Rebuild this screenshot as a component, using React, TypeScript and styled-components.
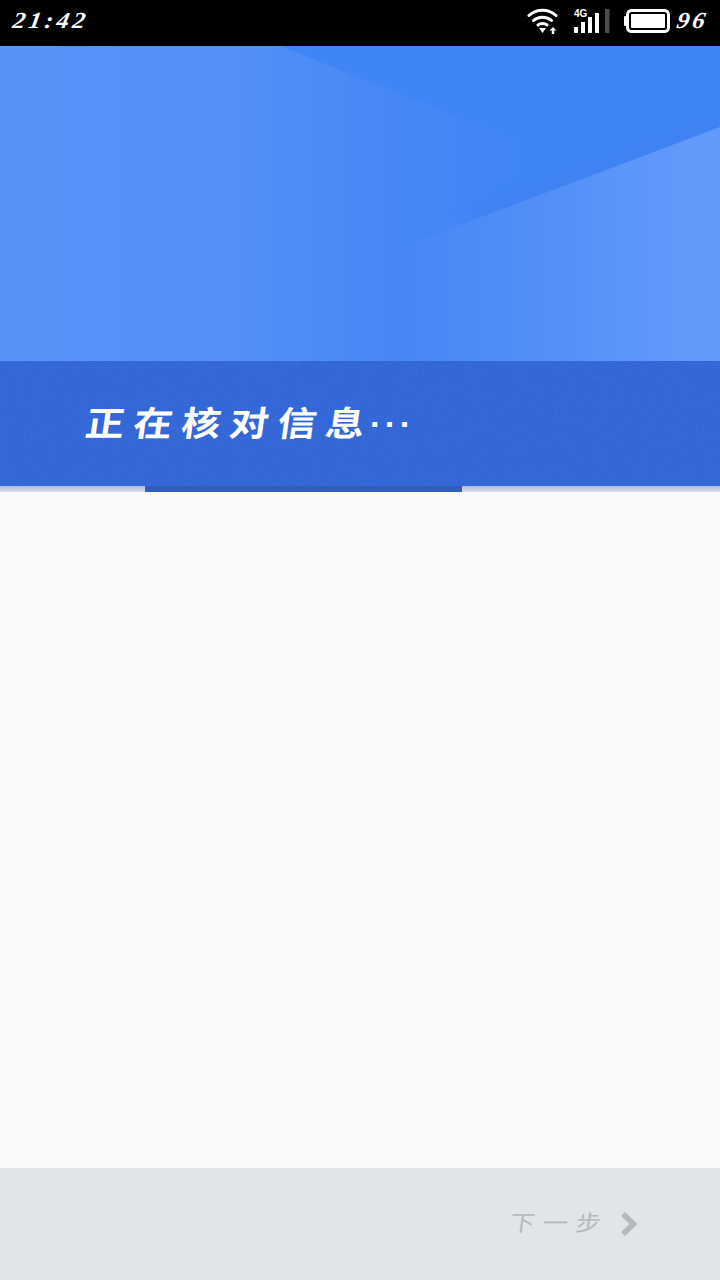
import { ReactElement } from "react";
import styled, { createGlobalStyle } from "styled-components";

const GlobalStyle = createGlobalStyle`
  html, body {
    margin: 0;
    padding: 0;
    background: #fafafa;
  }
  * {
    box-sizing: border-box;
  }
`;

const App = (): ReactElement => {
  return (
    <Page>
      <GlobalStyle />
      <StatusBar>
        <StatusText>21:42</StatusText>
        <StatusIcons>
          <IconSlot $gap={0}>
            <WifiIcon />
          </IconSlot>
          <IconSlot $gap={15}>
            <SignalIcon />
          </IconSlot>
          <IconSlot $gap={13}>
            <BatteryIcon />
          </IconSlot>
          <IconSlot $gap={7}>
            <BatteryLevel>96</BatteryLevel>
          </IconSlot>
        </StatusIcons>
      </StatusBar>
      <Hero>
        <HeroArt />
      </Hero>
      <Banner>
        <BannerGrain />
        <BannerTitle>正在核对信息</BannerTitle>
        <BannerDots>···</BannerDots>
      </Banner>
      <ProgressStrip>
        <ProgressFill />
      </ProgressStrip>
      <Content />
      <Footer>
        <NextLabel>下一步</NextLabel>
        <ChevronIcon />
      </Footer>
    </Page>
  );
};

export default App;

const WifiIcon = () => (
  <svg width="32" height="26" viewBox="0 0 32 26">
    <g fill="none" stroke="#fff" strokeWidth="3" strokeLinecap="round">
      <path d="M2 7.5 C9.5 0.6 21.5 0.6 29 7.5" />
      <path d="M6.5 12.5 C11.5 8 19.5 8 24.5 12.5" />
      <path d="M11 17 C13.5 15 17.5 15 20 17" />
    </g>
    <path d="M12 20 L19 20 L15.5 25 Z" fill="#fff" />
    <path d="M26 19 L29.5 22.5 L27.2 22.5 L27.2 26 L24.8 26 L24.8 22.5 L22.5 22.5 Z" fill="#fff" />
  </svg>
);

const SignalIcon = () => (
  <svg width="37" height="26" viewBox="0 0 37 26">
    <text x="0" y="9" fill="#fff" fontSize="10" fontWeight="700" fontFamily="'Liberation Sans', sans-serif">
      4G
    </text>
    <rect x="0" y="19" width="4" height="6" fill="#fff" />
    <rect x="7" y="14" width="4" height="11" fill="#fff" />
    <rect x="14" y="9" width="4" height="16" fill="#fff" />
    <rect x="21" y="5" width="4" height="20" fill="#fff" />
    <rect x="31" y="1" width="4.5" height="24" fill="#4a4a4a" />
  </svg>
);

const BatteryIcon = () => (
  <svg width="46" height="24" viewBox="0 0 46 24">
    <rect x="0" y="7" width="3" height="10" rx="1" fill="#fff" />
    <rect x="3.5" y="1.5" width="41" height="21" rx="4" fill="none" stroke="#fff" strokeWidth="3" />
    <rect x="7" y="5" width="34" height="14" rx="1" fill="#fff" />
  </svg>
);

const HeroArt = () => (
  <svg width="720" height="315" viewBox="0 0 720 315" style={{ display: "block" }}>
    <defs>
      <linearGradient id="heroBase" x1="0" y1="0" x2="720" y2="0" gradientUnits="userSpaceOnUse">
        <stop offset="0" stopColor="#5794f8" />
        <stop offset="0.33" stopColor="#5290f7" />
        <stop offset="0.555" stopColor="#4687f5" />
        <stop offset="0.72" stopColor="#4085f6" />
        <stop offset="1" stopColor="#4085f6" />
      </linearGradient>
      <linearGradient id="heroFacet" x1="400" y1="0" x2="690" y2="0" gradientUnits="userSpaceOnUse">
        <stop offset="0" stopColor="#4687f5" />
        <stop offset="0.5" stopColor="#5290f7" />
        <stop offset="1" stopColor="#629afb" />
      </linearGradient>
      <filter id="heroBlur" x="-10%" y="-50%" width="120%" height="200%">
        <feGaussianBlur stdDeviation="7" />
      </filter>
    </defs>
    <rect width="720" height="315" fill="url(#heroBase)" />
    <polygon points="280,0 720,0 720,81 598,127" fill="#4085f6" />
    <line x1="720" y1="76" x2="470" y2="170" stroke="#3a78e4" strokeOpacity="0.3" strokeWidth="12" filter="url(#heroBlur)" />
    <polygon points="720,81 415,196 385,315 720,315" fill="url(#heroFacet)" />
  </svg>
);

const BannerGrain = () => (
  <GrainSvg width="720" height="125">
    <filter id="grain">
      <feTurbulence type="fractalNoise" baseFrequency="0.9" numOctaves="2" seed="4" />
      <feColorMatrix values="0 0 0 0 0.55  0 0 0 0 0.68  0 0 0 0 1  0 0 0 1.4 -0.72" />
    </filter>
    <rect width="720" height="125" filter="url(#grain)" opacity="0.2" />
  </GrainSvg>
);

const ChevronIcon = () => (
  <svg width="18" height="26" viewBox="0 0 18 26">
    <path d="M3 3 L13.5 13 L3 23" fill="none" stroke="#b4b8bc" strokeWidth="5.5" />
  </svg>
);

const Page = styled.div`
  display: flex;
  flex-direction: column;
  width: 720px;
  height: 1280px;
  overflow: hidden;
`;

const StatusBar = styled.div`
  display: flex;
  justify-content: space-between;
  align-items: center;
  height: 46px;
  padding: 0 15px 4px 13px;
  background-color: #000;
`;

const StatusText = styled.span`
  display: inline-block;
  font-family: "Liberation Serif", serif;
  font-style: italic;
  font-weight: 700;
  font-size: 25px;
  letter-spacing: 3.5px;
  line-height: 26px;
  color: #fff;
  transform: skewX(-10deg) scaleY(0.92);
`;

const BatteryLevel = styled(StatusText)`
  letter-spacing: 3px;
  margin-right: -3px;
`;

const StatusIcons = styled.div`
  display: flex;
  align-items: center;
`;

const IconSlot = styled.div<{ $gap: number }>`
  display: flex;
  margin-left: ${(p) => p.$gap}px;
`;

const Hero = styled.div`
  height: 315px;
`;

const Banner = styled.div`
  position: relative;
  display: flex;
  align-items: center;
  height: 125px;
  padding: 0 0 6px 86px;
  background-color: #3366d6;
  color: #fff;
`;

const GrainSvg = styled.svg`
  position: absolute;
  top: 0;
  left: 0;
`;

const BannerTitle = styled.span`
  position: relative;
  display: inline-block;
  font-family: "Noto Sans CJK SC", sans-serif;
  font-weight: 700;
  font-size: 39px;
  letter-spacing: 9px;
  line-height: 48px;
  transform-origin: left center;
  transform: skewX(-8deg) scaleY(0.88);
`;

const BannerDots = styled.span`
  position: relative;
  font-family: "Liberation Sans", sans-serif;
  font-weight: 700;
  font-size: 34px;
  letter-spacing: 3.5px;
  line-height: 48px;
  margin: 6px 0 0 -4px;
`;

const ProgressStrip = styled.div`
  height: 6px;
  background: linear-gradient(#b4bad6, #dcdfec);
`;

const ProgressFill = styled.div`
  width: 317px;
  height: 6px;
  margin-left: 145px;
  background-color: #2f5dc0;
`;

const Content = styled.div`
  flex: 1;
  background-color: #fafafa;
`;

const Footer = styled.div`
  display: flex;
  justify-content: flex-end;
  align-items: center;
  gap: 18px;
  height: 112px;
  padding: 0 82px 0 0;
  background-color: #e1e5e8;
`;

const NextLabel = styled.span`
  display: inline-block;
  font-family: "Noto Sans CJK SC", sans-serif;
  font-size: 25px;
  letter-spacing: 8px;
  margin: 0 -7px 6px 0;
  color: #b4b8bc;
  transform: skewX(-8deg) scaleY(0.88);
`;
